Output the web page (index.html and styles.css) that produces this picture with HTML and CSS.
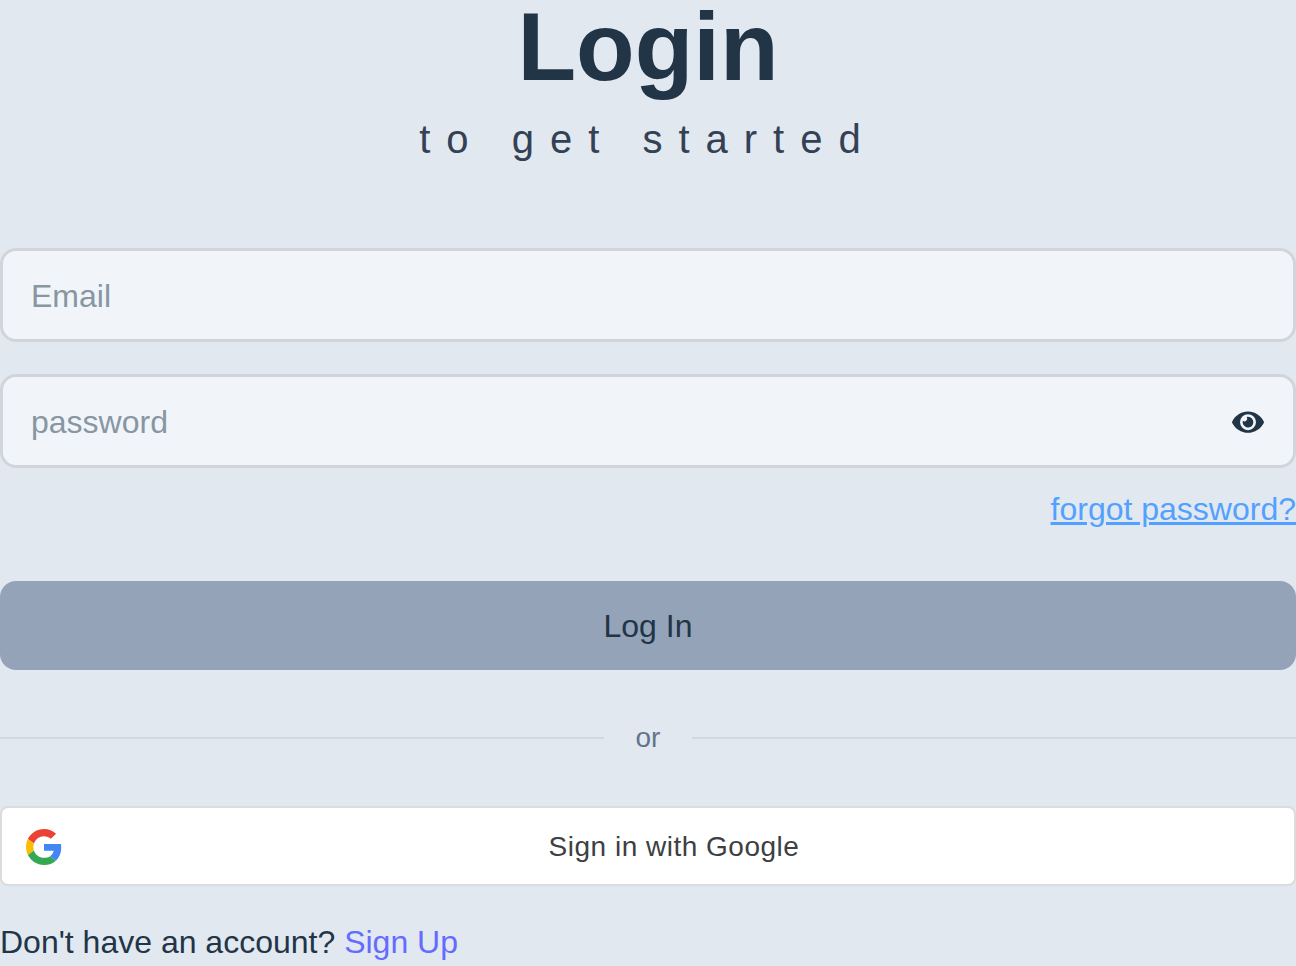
FILE: index.html
```html
<!DOCTYPE html>
<html lang="en">
<head>
<meta charset="utf-8">
<title>Login</title>
<link rel="stylesheet" href="styles.css">
</head>
<body>
<main class="login">
  <header class="heading">
    <h1 class="title">Login</h1>
    <p class="subtitle">to get started</p>
  </header>
  <form class="form">
    <div class="field"><input class="input" type="text" placeholder="Email"></div>
    <div class="field">
      <input class="input" type="password" placeholder="password">
      <svg class="eye" viewBox="0 0 576 512"><path fill="#213547" d="M572.520 241.400C518.290 135.590 410.930 64 288 64S57.680 135.640 3.480 241.410a32.350 32.350 0 0 0 0 29.190C57.710 376.410 165.070 448 288 448s230.320-71.640 284.520-177.410a32.350 32.350 0 0 0 0-29.190zM288 400a144 144 0 1 1 144-144 143.930 143.930 0 0 1-144 144zm0-240a95.310 95.310 0 0 0-25.310 3.790 47.850 47.850 0 0 1-66.900 66.900A95.780 95.780 0 1 0 288 160z"/></svg>
    </div>
    <a class="forgot">forgot password?</a>
    <button class="submit" type="button">Log In</button>
  </form>
  <div class="divider"><span class="line"></span><span class="or">or</span><span class="line"></span></div>
  <button class="google" type="button">
    <svg class="google-logo" viewBox="0 0 48 48"><path fill="#EA4335" d="M24 9.500c3.540 0 6.710 1.220 9.210 3.600l6.850-6.850C35.900 2.380 30.470 0 24 0 14.620 0 6.510 5.380 2.560 13.220l7.980 6.190C12.430 13.720 17.740 9.500 24 9.500z"/><path fill="#4285F4" d="M46.980 24.550c0-1.570-.15-3.090-.38-4.550H24v9.020h12.940c-.58 2.960-2.260 5.480-4.780 7.180l7.730 6c4.510-4.180 7.090-10.360 7.090-17.650z"/><path fill="#FBBC05" d="M10.530 28.590c-.48-1.450-.76-2.990-.76-4.590s.27-3.140.76-4.590l-7.980-6.190C.92 16.460 0 20.120 0 24c0 3.880.92 7.540 2.560 10.780l7.970-6.190z"/><path fill="#34A853" d="M24 48c6.480 0 11.930-2.130 15.890-5.810l-7.730-6c-2.150 1.450-4.920 2.300-8.160 2.300-6.260 0-11.570-4.220-13.470-9.910l-7.980 6.190C6.510 42.620 14.620 48 24 48z"/></svg>
    <span class="google-label">Sign in with Google</span>
  </button>
  <p class="signup">Don't have an account? <a class="signup-link">Sign Up</a></p>
</main>
</body>
</html>
```
FILE: styles.css
```css
* { box-sizing: border-box; }
body {
  margin: 0;
  height: 966px;
  overflow: hidden;
  background: #e2e8f0;
  color: #213547;
  font: 32px/48px Arial, "Liberation Sans", sans-serif;
}
.login { display: flex; flex-direction: column; }
.heading { text-align: center; height: 248px; }
.title { margin: 0; font-size: 96px; line-height: 94px; font-weight: 700; }
.subtitle {
  margin: 15px 0 0;
  font-size: 40px;
  line-height: 60px;
  letter-spacing: 16px;
  color: #334155;
}
.form { display: flex; flex-direction: column; }
.field {
  display: flex;
  align-items: center;
  height: 94px;
  margin-bottom: 32px;
  padding: 0 29px 0 28px;
  border: 3px solid #d1d5db;
  border-radius: 16px;
  background: #f1f5f9;
}
.input {
  flex: 1;
  min-width: 0;
  height: 50px;
  padding: 2px 0 0;
  border: 0;
  outline: 0;
  background: transparent;
  font: inherit;
}
.input::placeholder { color: #8896a3; opacity: 1; }
.eye { width: 32px; height: 28.400px; margin-top: 2px; flex: none; }
.forgot {
  align-self: flex-end;
  margin-top: -15px;
  color: #53a1ff;
  text-decoration: underline;
}
.submit {
  height: 89px;
  margin-top: 48px;
  padding: 0;
  border: 0;
  border-radius: 16px;
  background: #94a3b8;
  color: #213547;
  font: inherit;
}
.divider {
  display: flex;
  align-items: center;
  gap: 32px;
  height: 40px;
  margin-top: 48px;
  font-size: 28px;
  line-height: 40px;
  color: #64748b;
}
.line { flex: 1; height: 2px; background: #cfd8e5; }
.google {
  display: flex;
  align-items: center;
  height: 80px;
  margin-top: 48px;
  padding: 0 24px;
  border: 2px solid #dadce0;
  border-radius: 8px;
  background: #fff;
  color: #3c4043;
  font: 28px/40px Arial, "Liberation Sans", sans-serif;
  letter-spacing: 0.5px;
}
.google-logo { width: 36px; height: 36px; margin-top: 1px; flex: none; }
.google-label { flex: 1; padding: 2px 20px 0 36px; text-align: center; }
.signup { margin: 32px 0 0; }
.signup-link { color: #646cff; }
```
